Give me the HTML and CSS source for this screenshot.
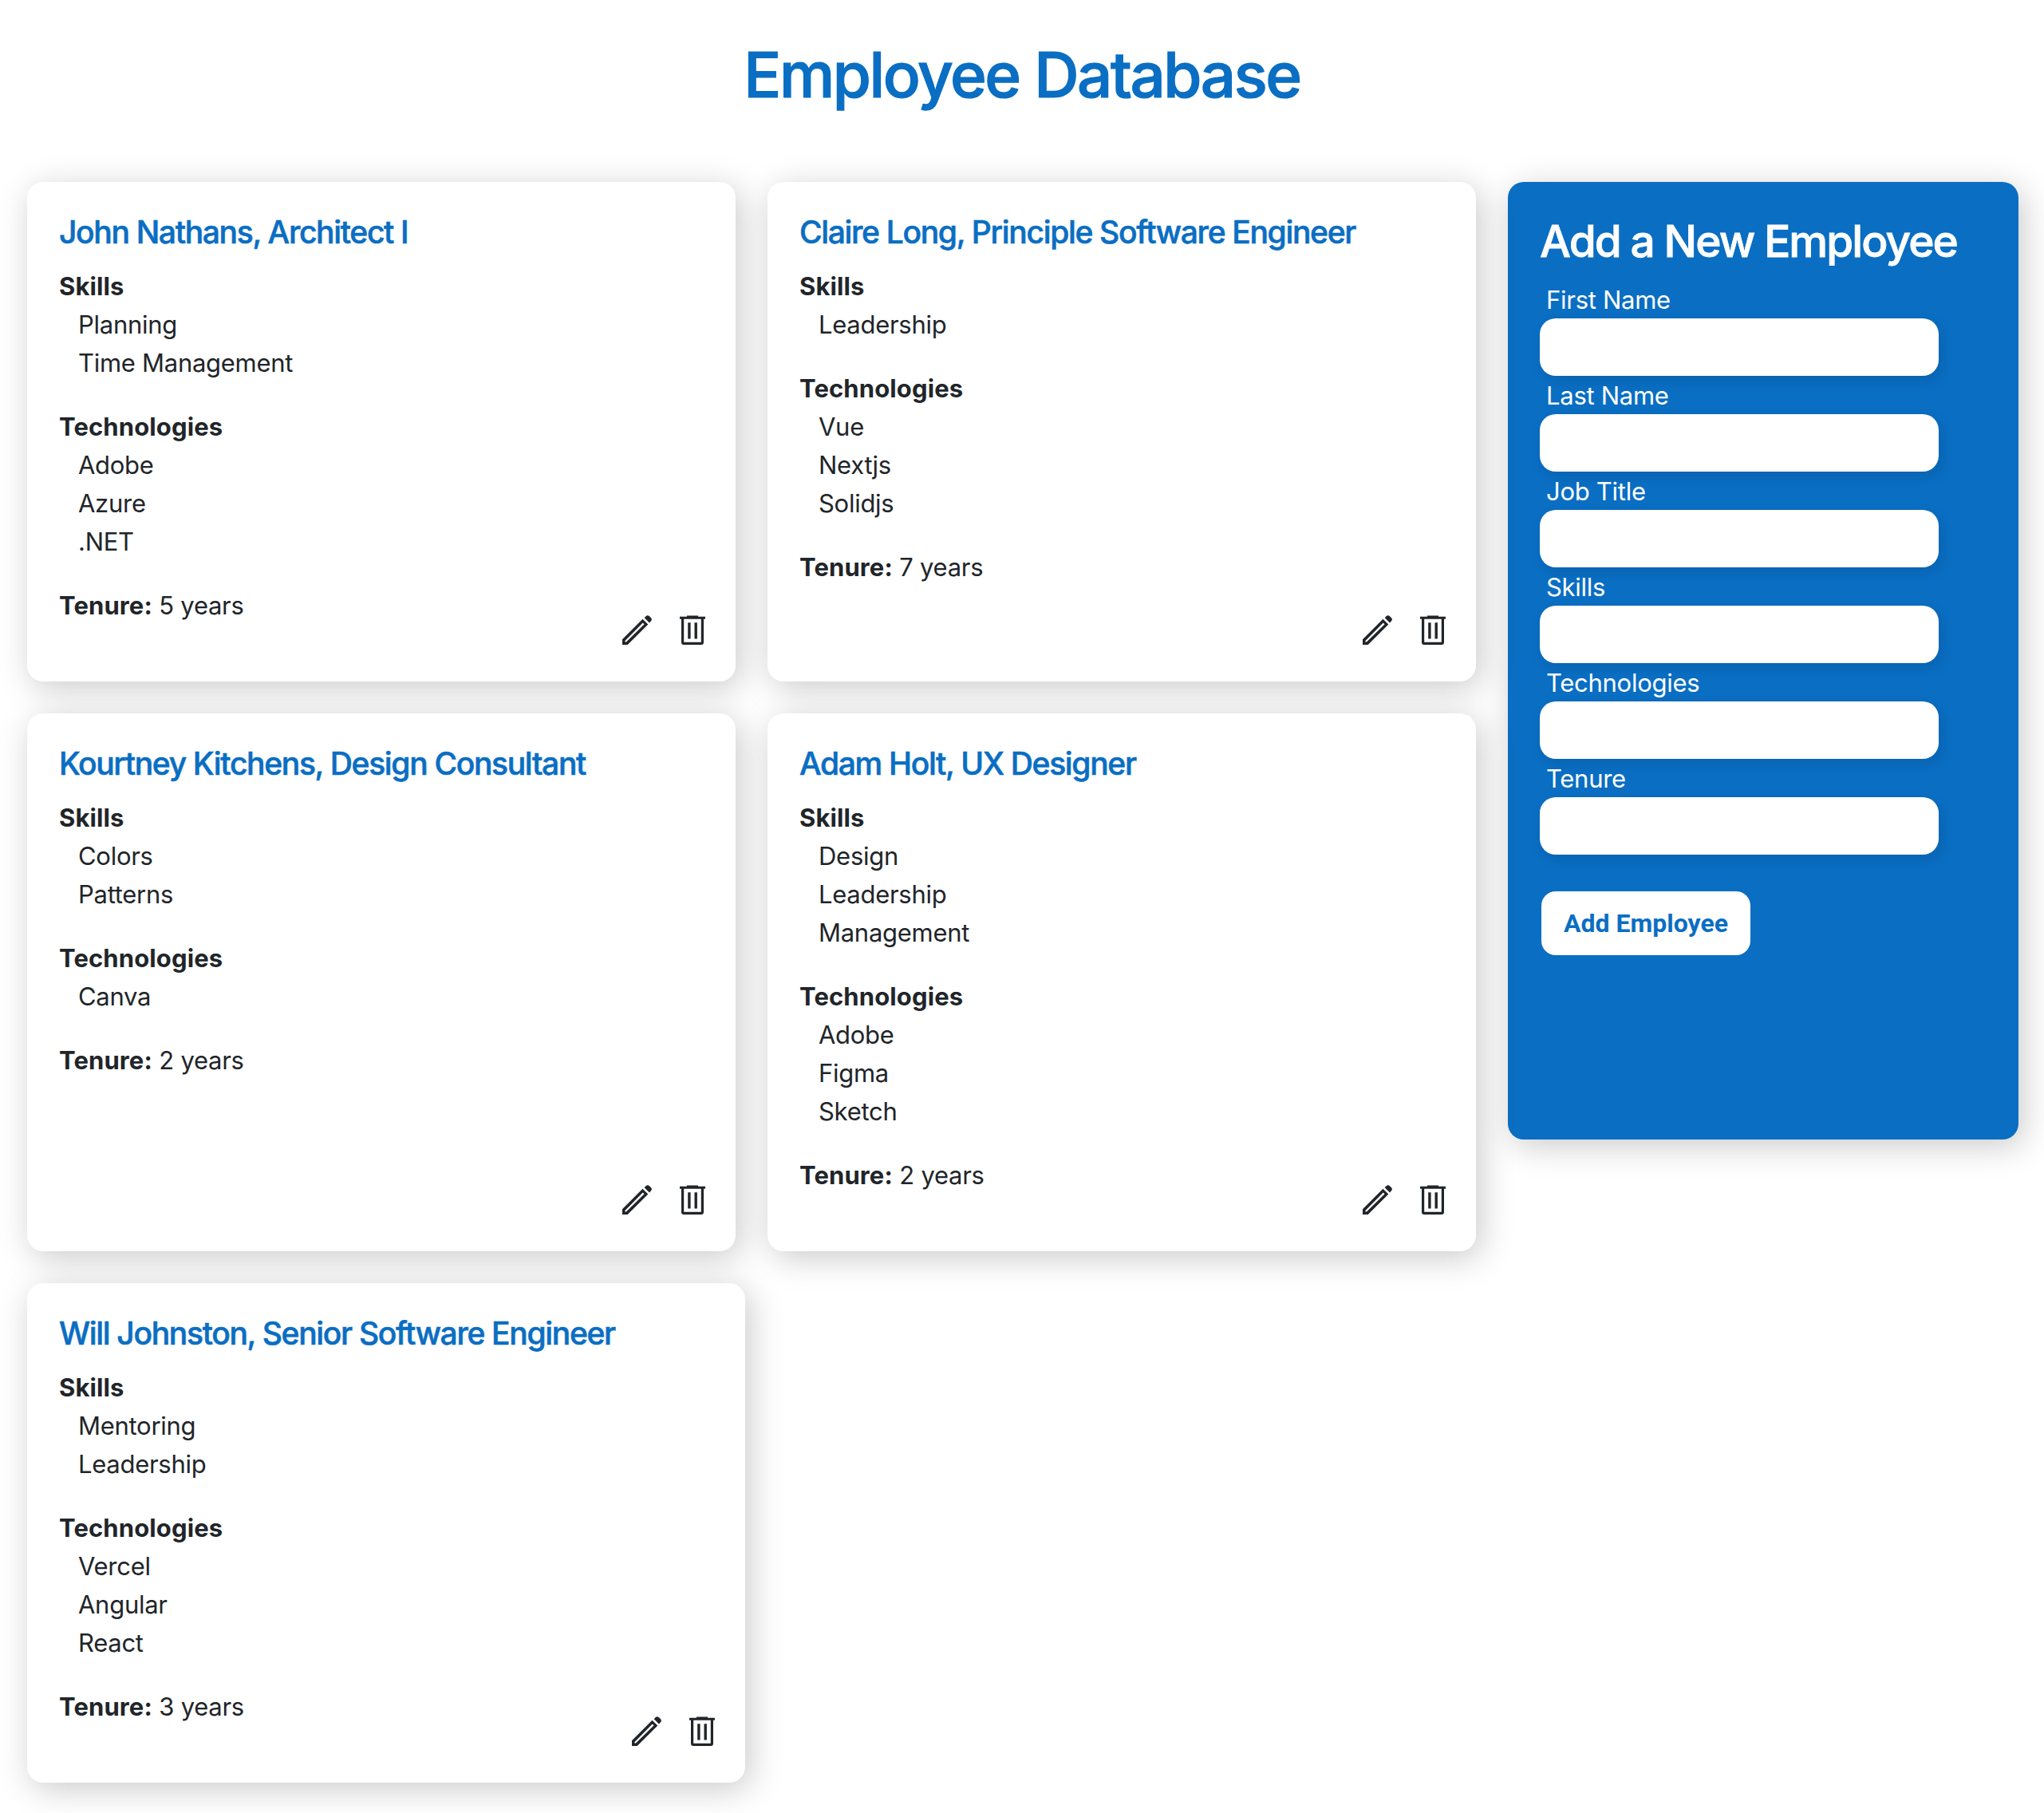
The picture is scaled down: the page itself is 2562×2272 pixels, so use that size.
FILE: index.html
```html
<!DOCTYPE html>
<html lang="en">
<head>
<meta charset="utf-8">
<title>Employee Database</title>
<link rel="stylesheet" href="styles.css">
</head>
<body>
<svg class="sprite" aria-hidden="true">
  <symbol id="pencil" viewBox="0 0 37 37"><path fill-rule="evenodd" d="M0 37V30.300L25.500 4.700L32.300 11.500L6.700 37ZM3.500 33.600H4.900L27.600 11.300L25.700 9.400L3.500 31.900Z"/><path d="M27.700 3.200L29.800 1Q31.800-.8 34 1.200L36 3.200Q37.800 5.200 36 7.200L34 9.500Z"/></symbol>
  <symbol id="trash" viewBox="0 0 32 37"><path fill-rule="evenodd" d="M0 1.700H9V.4H23V1.700H32V4.700H30V34Q30 37 27 37H5Q2 37 2 34V4.700H0ZM5.200 4.700V33.700H26.800V4.700Z"/><path d="M10.200 9.300h3.400v20.200h-3.400zM18.500 9.300h3.400v20.200h-3.400z"/></symbol>
</svg>
<h1 class="page-title">Employee Database</h1>
<main class="layout">
  <section class="cards">
    <article class="card">
      <h2 class="name">John Nathans, Architect I</h2>
      <h3>Skills</h3>
      <ul><li>Planning</li><li>Time Management</li></ul>
      <h3>Technologies</h3>
      <ul><li>Adobe</li><li>Azure</li><li>.NET</li></ul>
      <p><b>Tenure:</b> 5 years</p>
      <div class="actions"><svg class="pencil"><use href="#pencil"/></svg><svg class="trash"><use href="#trash"/></svg></div>
    </article>
    <article class="card">
      <h2 class="name">Claire Long, Principle Software Engineer</h2>
      <h3>Skills</h3>
      <ul><li>Leadership</li></ul>
      <h3>Technologies</h3>
      <ul><li>Vue</li><li>Nextjs</li><li>Solidjs</li></ul>
      <p><b>Tenure:</b> 7 years</p>
      <div class="actions"><svg class="pencil"><use href="#pencil"/></svg><svg class="trash"><use href="#trash"/></svg></div>
    </article>
    <article class="card">
      <h2 class="name">Kourtney Kitchens, Design Consultant</h2>
      <h3>Skills</h3>
      <ul><li>Colors</li><li>Patterns</li></ul>
      <h3>Technologies</h3>
      <ul><li>Canva</li></ul>
      <p><b>Tenure:</b> 2 years</p>
      <div class="actions"><svg class="pencil"><use href="#pencil"/></svg><svg class="trash"><use href="#trash"/></svg></div>
    </article>
    <article class="card">
      <h2 class="name">Adam Holt, UX Designer</h2>
      <h3>Skills</h3>
      <ul><li>Design</li><li>Leadership</li><li>Management</li></ul>
      <h3>Technologies</h3>
      <ul><li>Adobe</li><li>Figma</li><li>Sketch</li></ul>
      <p><b>Tenure:</b> 2 years</p>
      <div class="actions"><svg class="pencil"><use href="#pencil"/></svg><svg class="trash"><use href="#trash"/></svg></div>
    </article>
    <article class="card wide">
      <h2 class="name">Will Johnston, Senior Software Engineer</h2>
      <h3>Skills</h3>
      <ul><li>Mentoring</li><li>Leadership</li></ul>
      <h3>Technologies</h3>
      <ul><li>Vercel</li><li>Angular</li><li>React</li></ul>
      <p><b>Tenure:</b> 3 years</p>
      <div class="actions"><svg class="pencil"><use href="#pencil"/></svg><svg class="trash"><use href="#trash"/></svg></div>
    </article>
  </section>
  <form class="panel">
    <h2>Add a New Employee</h2>
    <label for="first">First Name</label><input id="first">
    <label for="last">Last Name</label><input id="last">
    <label for="job">Job Title</label><input id="job">
    <label for="skills">Skills</label><input id="skills">
    <label for="tech">Technologies</label><input id="tech">
    <label for="tenure">Tenure</label><input id="tenure">
    <button type="button">Add Employee</button>
  </form>
</main>
</body>
</html>
```
FILE: styles.css
```css
* { box-sizing: border-box; }
body {
  margin: 0;
  background: #fff;
  color: #212529;
  font: 31px/48px Inter, "Liberation Sans", sans-serif;
  letter-spacing: -0.009em;
}
h1, h2, h3, p, ul { margin: 0; padding: 0; }
ul { list-style: none; }
.sprite { position: absolute; width: 0; height: 0; }
.page-title {
  height: 228px;
  padding-top: 46px;
  color: #0a6ec3;
  font-size: 78px;
  font-weight: 500;
  line-height: 96px;
  letter-spacing: -0.031em;
  text-align: center;
  -webkit-text-stroke: 1.2px currentColor;
}
.layout {
  display: flex;
  align-items: flex-start;
  gap: 40px;
  padding: 0 32px 38px 34px;
}
.cards {
  display: grid;
  grid-template-columns: 888px 888px;
  gap: 40px;
}
.card {
  position: relative;
  padding: 40px 40px 71px;
  border-radius: 20px;
  background: #fff;
  box-shadow: 6px 8px 42px rgba(0, 0, 0, 0.21);
}
.wide { width: 900px; }
.name {
  margin: -1px 0 20px;
  color: #0a6ec3;
  font-size: 39px;
  font-weight: 500;
  line-height: 48px;
  letter-spacing: -0.034em;
  -webkit-text-stroke: 0.6px currentColor;
}
.card h3, .card b { font-size: 31px; font-weight: 700; letter-spacing: 0.004em; }
.card ul { margin-bottom: 32px; padding-left: 24px; }
.actions {
  position: absolute;
  right: 38px;
  bottom: 46px;
  display: flex;
  gap: 35px;
  fill: #212529;
}
.pencil { width: 37px; height: 37px; }
.trash { width: 32px; height: 37px; }
.panel {
  width: 640px;
  height: 1200px;
  padding: 41px 40px 40px;
  border-radius: 20px;
  background: #0a6ec3;
  color: #fff;
  box-shadow: 6px 8px 42px rgba(0, 0, 0, 0.21);
}
.panel h2 {
  margin-bottom: 15px;
  font-size: 55px;
  font-weight: 500;
  line-height: 67px;
  letter-spacing: -0.035em;
  white-space: nowrap;
  -webkit-text-stroke: 0.8px currentColor;
}
.panel label { display: block; height: 48px; padding: 1px 0 0 8px; }
.panel input {
  display: block;
  width: 500px;
  height: 72px;
  border: 0;
  border-radius: 20px;
  background: #fff;
  box-shadow: 4px 6px 16px rgba(0, 0, 0, 0.1);
}
.panel button {
  width: 262px;
  height: 80px;
  margin: 46px 0 0 2px;
  padding: 0;
  border: 0;
  border-radius: 18px;
  background: #fff;
  color: #0a6ec3;
  font: 700 32px Roboto, sans-serif;
}
```
